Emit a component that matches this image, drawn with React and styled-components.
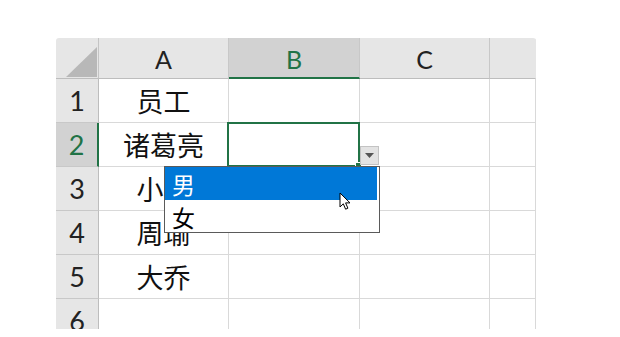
import styled, { createGlobalStyle } from "styled-components";

const GlobalStyle = createGlobalStyle`
  html, body {
    margin: 0;
    padding: 0;
    background: #ffffff;
  }
  body {
    font-family: Lato, "Noto Sans CJK SC", sans-serif;
  }
`;

const Page = styled.div`
  width: 620px;
  height: 337px;
  padding: 38px 0 0 56px;
  box-sizing: border-box;
  overflow: hidden;
`;

const Sheet = styled.div`
  display: grid;
  grid-template-columns: 43px 130px 131px 130px 46px;
  grid-template-rows: 41px repeat(6, 44px);
  width: 480px;
  height: 291px;
  border-radius: 3px 3px 0 0;
  overflow: hidden;
`;

const Corner = styled.div`
  background: #e6e6e6;
  border-right: 1px solid #c4c4c4;
  border-bottom: 1px solid #bdbdbd;
  box-sizing: border-box;
  display: flex;
  align-items: flex-end;
  justify-content: flex-end;
  padding: 0 1px 1px 0;
`;

const ColHead = styled.div`
  background: ${(p) => (p.$active ? "#d2d2d2" : "#e6e6e6")};
  color: ${(p) => (p.$active ? "#217346" : "#222")};
  border-right: 1px solid ${(p) => (p.$last ? "#e6e6e6" : "#c8c8c8")};
  border-bottom: ${(p) => (p.$active ? "2px solid #217346" : "1px solid #bdbdbd")};
  box-sizing: border-box;
  display: flex;
  align-items: center;
  justify-content: center;
  padding-top: 2px;
  font-family: Lato, sans-serif;
  font-size: 25px;
`;

const RowHead = styled.div`
  background: ${(p) => (p.$active ? "#d2d2d2" : "#e6e6e6")};
  color: ${(p) => (p.$active ? "#217346" : "#222")};
  border-right: ${(p) => (p.$active ? "2px solid #217346" : "1px solid #bdbdbd")};
  border-bottom: 1px solid #c8c8c8;
  box-sizing: border-box;
  display: flex;
  align-items: center;
  justify-content: center;
  font-family: Lato, sans-serif;
  font-size: 27px;
`;

const Cell = styled.div`
  position: relative;
  border-right: 1px solid #d9d9d9;
  border-bottom: 1px solid #d9d9d9;
  box-sizing: border-box;
  display: flex;
  align-items: center;
  justify-content: center;
  color: #111;
  font-family: "Noto Sans CJK SC", sans-serif;
  font-size: 27px;
  background: #fff;
`;

const Selection = styled.div`
  position: absolute;
  left: -2px;
  top: -1px;
  width: 133px;
  height: 45px;
  border: 2px solid #217346;
  box-sizing: border-box;
  pointer-events: none;
  z-index: 1;
`;

const Handle = styled.div`
  position: absolute;
  right: -4px;
  bottom: -4px;
  width: 5px;
  height: 5px;
  background: #217346;
  border: 1px solid #fff;
`;

const ArrowButton = styled.div`
  position: absolute;
  left: 131px;
  top: 23px;
  width: 19px;
  height: 19px;
  box-sizing: border-box;
  background: #e3e3e3;
  border: 1px solid #c3c3c3;
  display: flex;
  align-items: center;
  justify-content: center;
  z-index: 2;
`;

const DropList = styled.div`
  position: absolute;
  left: -65px;
  top: 43px;
  width: 216px;
  height: 67px;
  box-sizing: border-box;
  background: #fff;
  border: 1px solid #5a5a5a;
  padding: 0 2px 0 0;
  z-index: 3;
  display: flex;
  flex-direction: column;
`;

const Option = styled.div`
  height: 33px;
  display: flex;
  align-items: center;
  padding-left: 7px;
  font-family: "Noto Sans CJK SC", sans-serif;
  font-size: 23px;
  background: ${(p) => (p.$hover ? "#0078d7" : "transparent")};
  color: ${(p) => (p.$hover ? "#fff" : "#000")};
`;

const Pointer = styled.svg`
  position: absolute;
  left: 174px;
  top: 25px;
  z-index: 4;
`;

const cols = ["A", "B", "C", ""];
const rows = [
  ["员工", "", "", ""],
  ["诸葛亮", "", "", ""],
  ["小乔", "", "", ""],
  ["周瑜", "", "", ""],
  ["大乔", "", "", ""],
  ["", "", "", ""],
];

function App() {
  return (
    <Page>
      <GlobalStyle />
      <Sheet>
        <Corner>
          <svg width="31" height="30" viewBox="0 0 31 30">
            <polygon points="31,0 31,30 0,30" fill="#b8b8b8" />
          </svg>
        </Corner>
        {cols.map((c, i) => (
          <ColHead key={i} $active={c === "B"} $last={i === cols.length - 1}>
            {c}
          </ColHead>
        ))}
        {rows.map((r, ri) => [
          <RowHead key={`h${ri}`} $active={ri === 1}>
            {ri + 1}
          </RowHead>,
          ...r.map((v, ci) => (
            <Cell key={`${ri}-${ci}`}>
              {v}
              {ri === 1 && ci === 1 && (
                <>
                  <Selection>
                    <Handle />
                  </Selection>
                  <ArrowButton>
                    <svg width="9" height="5" viewBox="0 0 9 5">
                      <polygon points="0,0 9,0 4.5,5" fill="#555" />
                    </svg>
                  </ArrowButton>
                  <DropList>
                    <Option $hover>男</Option>
                    <Option>女</Option>
                    <Pointer width="13" height="19" viewBox="0 0 13 19">
                      <path
                        d="M1 1 L1 15 L4.3 11.8 L6.6 17.2 L8.9 16.2 L6.6 10.9 L11 10.9 Z"
                        fill="#fff"
                        stroke="#000"
                        strokeWidth="1"
                        strokeLinejoin="round"
                      />
                    </Pointer>
                  </DropList>
                </>
              )}
            </Cell>
          )),
        ])}
      </Sheet>
    </Page>
  );
}

export default App;
